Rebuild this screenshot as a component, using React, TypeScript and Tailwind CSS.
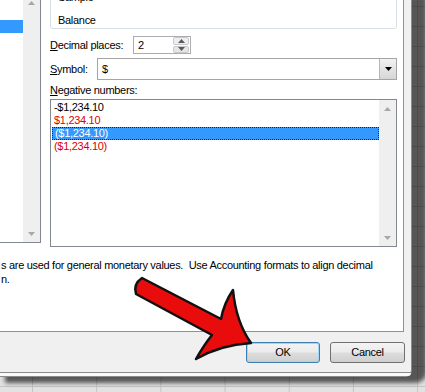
import React from 'react'

const negatives = [
  { label: '-$1,234.10', red: false, selected: false },
  { label: '$1,234.10', red: true, selected: false },
  { label: '($1,234.10)', red: false, selected: true },
  { label: '($1,234.10)', red: true, selected: false },
]

function Triangle({ down = false, className = '' }: { down?: boolean; className?: string }) {
  return (
    <svg width="7" height="4" viewBox="0 0 7 4" className={className}>
      <path d={down ? 'M0 0h7L3.5 4z' : 'M0 4h7L3.5 0z'} fill="currentColor" />
    </svg>
  )
}

function ScrollBar() {
  return (
    <div className="flex w-[17px] flex-col items-center justify-between self-stretch bg-[#efefef]">
      <div className="flex h-[17px] items-center">
        <Triangle className="text-[#a8a8a8]" />
      </div>
      <div className="flex h-[17px] items-center">
        <Triangle down className="text-[#a8a8a8]" />
      </div>
    </div>
  )
}

function Button({ label, primary = false }: { label: string; primary?: boolean }) {
  return (
    <button
      className={`flex h-[21px] items-center justify-center rounded-[3px] border bg-[linear-gradient(to_bottom,#f3f3f3_0%,#ebebeb_48%,#dddddd_52%,#cfcfcf_100%)] text-[11px] text-black ${
        primary ? 'w-[74px] border-[#3c7fb1] shadow-[inset_0_0_0_1px_#9fd5f5]' : 'w-[75px] border-[#707070]'
      }`}
    >
      {label}
    </button>
  )
}

function ArrowOverlay() {
  return (
    <svg
      className="pointer-events-none absolute left-0 top-0"
      width="425"
      height="392"
      viewBox="0 0 425 392"
    >
      <path
        d="M142 278 L221 319 Q224 303 233 290 Q236 322 251 343 Q220 345 196 359 Q204 345 212 335 L136 294 Q133 284 142 278 Z"
        fill="#e80c0c"
        stroke="#111"
        strokeWidth="2.5"
        strokeLinejoin="round"
      />
    </svg>
  )
}

export default function App() {
  return (
    <div className="relative h-[392px] w-[425px] overflow-hidden bg-[#e2e2e2] bg-[linear-gradient(to_right,#c4c4c4_1px,transparent_1px),linear-gradient(to_bottom,#c4c4c4_1px,transparent_1px)] bg-[size:64.2px_20px] [background-position:32px_6px] font-['Liberation_Sans',Arial,sans-serif] text-[11px] tracking-[-0.3px] text-black">
      {/* Format Cells dialog */}
      <div className="absolute left-0 top-0 flex h-[377px] w-[412px] flex-col rounded-br-[7px] border-r border-b border-[#8a8a8a] bg-[#f0f0f0] shadow-[10px_1px_4px_5px_rgba(0,0,0,0.62)]">
        {/* Number tab page */}
        <div className="flex h-[332px] w-[404px] flex-col border-r border-b border-[#8e9196] bg-white">
          <div className="flex h-[247px] items-start">
            {/* Category list */}
            <div className="-mt-[6px] flex h-[249px] w-[41px] border-r border-b border-[#828790]">
              <div className="w-[23px]">
                <div className="mt-[26px] h-[13px] bg-[#3399ff]" />
              </div>
              <ScrollBar />
            </div>

            <div className="ml-[9px] flex w-[347px] flex-col">
              {/* Sample */}
              <div className="-mt-[13px] flex h-[42px] flex-col rounded-[3px] border border-[#d5dfe5] pl-[7px] pt-[2px] leading-[14px]">
                <span>Sample</span>
                <span className="mt-[9px]">Balance</span>
              </div>

              {/* Decimal places */}
              <div className="mt-[7px] flex h-[18px] items-center">
                <span className="w-[83px]">
                  <span className="underline">D</span>ecimal places:
                </span>
                <div className="flex h-[18px] w-[58px] items-center border border-[#abadb3]">
                  <span className="flex-1 pl-[4px]">2</span>
                  <div className="mr-[1px] flex h-[16px] w-[16px] flex-col gap-[1px]">
                    <div className="flex flex-1 items-center justify-center rounded-[2px] border border-[#c9c9c9] bg-[#eeeeee]">
                      <Triangle className="text-[#5a5a5a]" />
                    </div>
                    <div className="flex flex-1 items-center justify-center rounded-[2px] border border-[#c9c9c9] bg-[#e6e6e6]">
                      <Triangle down className="text-[#5a5a5a]" />
                    </div>
                  </div>
                </div>
              </div>

              {/* Symbol */}
              <div className="mt-[4px] flex h-[22px] items-center">
                <span className="w-[47px]">
                  <span className="underline">S</span>ymbol:
                </span>
                <div className="flex h-[22px] w-[300px] items-center border border-[#a5a5a5]">
                  <span className="flex-1 pl-[4px]">$</span>
                  <div className="flex h-[20px] w-[17px] items-center justify-center border-l border-[#b5b5b5] bg-[linear-gradient(to_bottom,#f2f2f2,#d6d6d6)]">
                    <Triangle down className="text-black" />
                  </div>
                </div>
              </div>

              {/* Negative numbers */}
              <span className="mt-[3px] leading-[14px]">
                <span className="underline">N</span>egative numbers:
              </span>
              <div className="mt-[2px] flex h-[148px] border border-[#828790]">
                <div className="flex flex-1 flex-col pl-[1px] pt-[1px]">
                  {negatives.map((n, i) => (
                    <div
                      key={i}
                      className={`flex h-[13px] items-center pl-[2px] leading-[13px] ${
                        n.selected
                          ? 'border border-dotted border-[#222] bg-[#3399ff] text-white'
                          : n.red
                            ? 'text-[#e00000]'
                            : ''
                      }`}
                    >
                      {n.label}
                    </div>
                  ))}
                </div>
                <ScrollBar />
              </div>
            </div>
          </div>

          {/* Description */}
          <p className="mt-[11px] whitespace-pre pl-[1px] leading-[14px]">
            {'s are used for general monetary values.  Use Accounting formats to align decimal\nn.'}
          </p>
        </div>

        {/* Footer buttons */}
        <div className="flex h-[41px] justify-end gap-[10px] border-b border-[#8a8a8a] pr-[6px] pt-[10px]">
          <Button label="OK" primary />
          <Button label="Cancel" />
        </div>
        <div className="flex-1 rounded-br-[6px] bg-[#fafafa]" />
      </div>

      <ArrowOverlay />
    </div>
  )
}
